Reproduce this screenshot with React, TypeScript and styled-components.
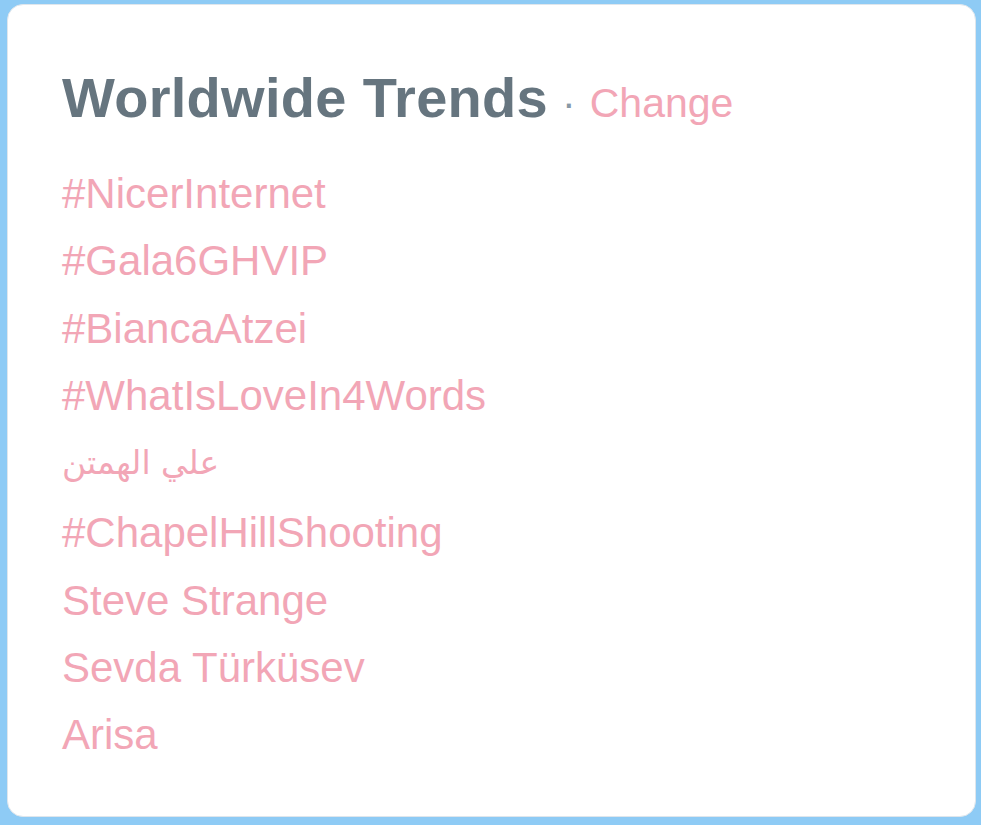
import React from "react";
import styled, { createGlobalStyle } from "styled-components";

const GlobalStyle = createGlobalStyle`
  html, body {
    margin: 0;
    padding: 0;
    background: #8ecbf5;
  }
  #root {
    width: 981px;
    height: 825px;
  }
`;

const Frame = styled.div`
  box-sizing: border-box;
  width: 981px;
  height: 825px;
  padding: 4px 5px 8px 7px;
  display: flex;
  background: #8ecbf5;
`;

const Card = styled.section`
  box-sizing: border-box;
  flex: 1;
  background: #ffffff;
  border: 1px solid #dfe6ec;
  border-radius: 16px;
  padding: 64px 40px 0 54px;
  display: flex;
  flex-direction: column;
  font-family: "Liberation Sans", Arial, "DejaVu Sans", sans-serif;
`;

const Header = styled.div`
  display: flex;
  align-items: baseline;
  white-space: nowrap;
`;

const Title = styled.h3`
  margin: 0;
  font-size: 56px;
  line-height: 57px;
  font-weight: bold;
  color: #66757f;
  letter-spacing: 0.3px;
`;

const Dot = styled.span`
  font-size: 41px;
  color: #8899a6;
  margin: 0 14px 0 14px;
`;

const Change = styled.a`
  font-size: 41px;
  color: #f2a6b6;
  text-decoration: none;
`;

const List = styled.ul`
  list-style: none;
  margin: 33px 0 0;
  padding: 0;
  display: flex;
  flex-direction: column;
`;

const Item = styled.li<{ $rtl?: boolean }>`
  font-size: 42px;
  line-height: 67.3px;
  color: #f2a6b6;
  white-space: nowrap;
  font-family: ${(p) =>
    p.$rtl
      ? '"DejaVu Sans", "Noto Sans", sans-serif'
      : '"Liberation Sans", Arial, sans-serif'};
`;

const ArabicText = styled.span`
  display: inline-block;
  direction: rtl;
  font-size: 33px;
  transform: translateY(-3px);
`;

const trends: { text: string; rtl?: boolean }[] = [
  { text: "#NicerInternet" },
  { text: "#Gala6GHVIP" },
  { text: "#BiancaAtzei" },
  { text: "#WhatIsLoveIn4Words" },
  { text: "علي الهمتن", rtl: true },
  { text: "#ChapelHillShooting" },
  { text: "Steve Strange" },
  { text: "Sevda Türküsev" },
  { text: "Arisa" },
];

export default function App() {
  return (
    <>
      <GlobalStyle />
      <Frame>
        <Card>
          <Header>
            <Title>Worldwide Trends</Title>
            <Dot>·</Dot>
            <Change href="#">Change</Change>
          </Header>
          <List>
            {trends.map((t) => (
              <Item key={t.text} $rtl={t.rtl}>
                {t.rtl ? <ArabicText>{t.text}</ArabicText> : t.text}
              </Item>
            ))}
          </List>
        </Card>
      </Frame>
    </>
  );
}
